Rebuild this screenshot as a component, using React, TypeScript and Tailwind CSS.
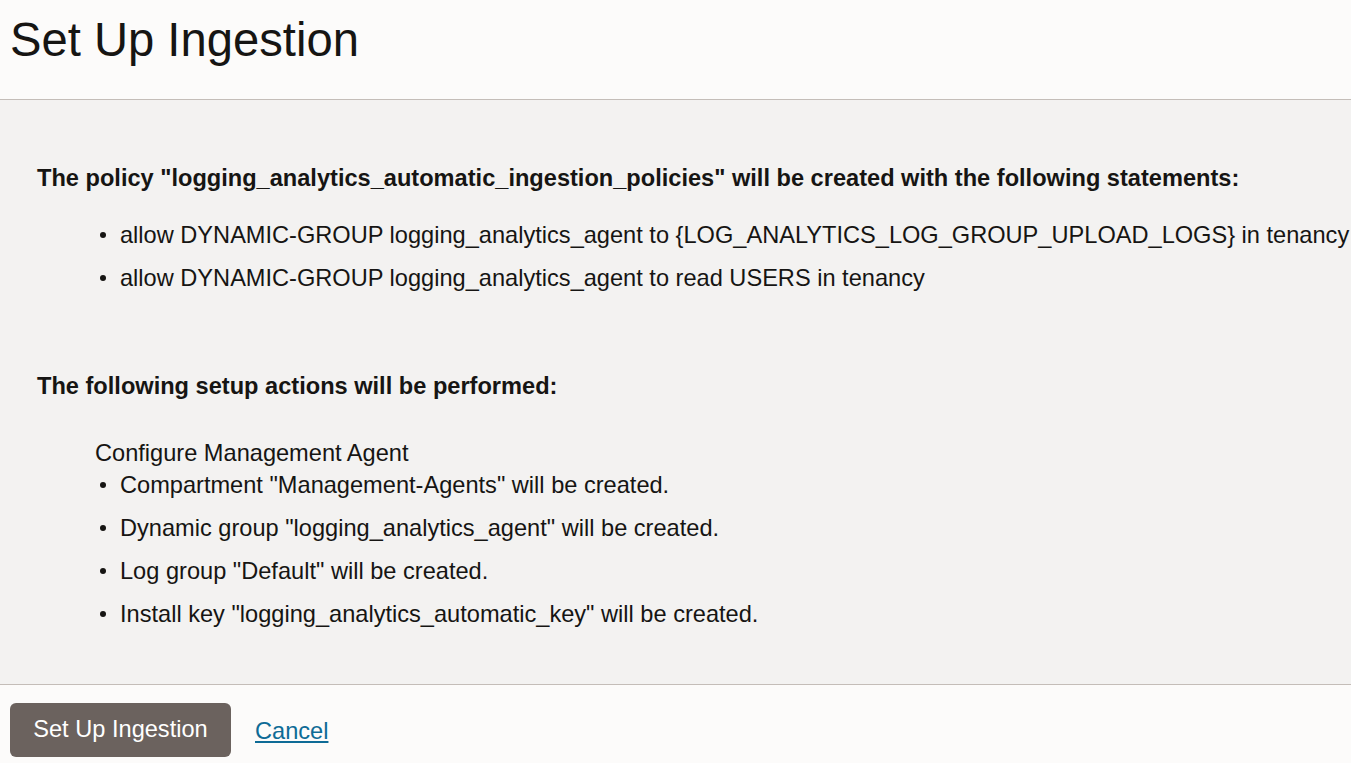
export default function App() {
  const policies = [
    "allow DYNAMIC-GROUP logging_analytics_agent to {LOG_ANALYTICS_LOG_GROUP_UPLOAD_LOGS} in tenancy",
    "allow DYNAMIC-GROUP logging_analytics_agent to read USERS in tenancy",
  ];
  const actions = [
    'Compartment "Management-Agents" will be created.',
    'Dynamic group "logging_analytics_agent" will be created.',
    'Log group "Default" will be created.',
    'Install key "logging_analytics_automatic_key" will be created.',
  ];

  return (
    <div
      className="w-[1351px] h-[763px] overflow-hidden flex flex-col text-[#161513]"
      style={{ fontFamily: '"Liberation Sans", Arial, sans-serif' }}
    >
      <header className="h-[100px] shrink-0 bg-[#fcfbfa] border-b border-[#c4bdb8] px-[10px] pt-[13px]">
        <h1 className="text-[47.2px] leading-[54px]">Set Up Ingestion</h1>
      </header>

      <main className="flex-1 bg-[#f3f2f1] pt-[64px] text-[23.6px] leading-[28px] whitespace-nowrap">
        <div className="pl-[37px] font-bold">
          The policy "logging_analytics_automatic_ingestion_policies" will be created with the following statements:
        </div>
        <ul className="mt-[29px] flex flex-col gap-[15px]">
          {policies.map((p) => (
            <li key={p} className="flex items-center">
              <span className="ml-[100px] mr-[14px] w-[6px] h-[6px] rounded-full bg-[#161513]" />
              <span>{p}</span>
            </li>
          ))}
        </ul>

        <div className="pl-[37px] font-bold mt-[80px]">The following setup actions will be performed:</div>
        <div className="pl-[95px] mt-[39px]">Configure Management Agent</div>
        <ul className="mt-[4px] flex flex-col gap-[15px]">
          {actions.map((a) => (
            <li key={a} className="flex items-center">
              <span className="ml-[100px] mr-[14px] w-[6px] h-[6px] rounded-full bg-[#161513]" />
              <span>{a}</span>
            </li>
          ))}
        </ul>
      </main>

      <footer className="h-[79px] shrink-0 bg-[#fcfbfa] border-t border-[#c4bdb8] flex items-start pt-[18px] pl-[10px]">
        <button className="h-[54px] w-[221px] rounded-[6px] bg-[#6b625e] text-white text-[23.6px]">
          Set Up Ingestion
        </button>
        <a href="#" className="ml-[24px] mt-[11px] text-[23.6px] text-[#0e6b96] underline">
          Cancel
        </a>
      </footer>
    </div>
  );
}
